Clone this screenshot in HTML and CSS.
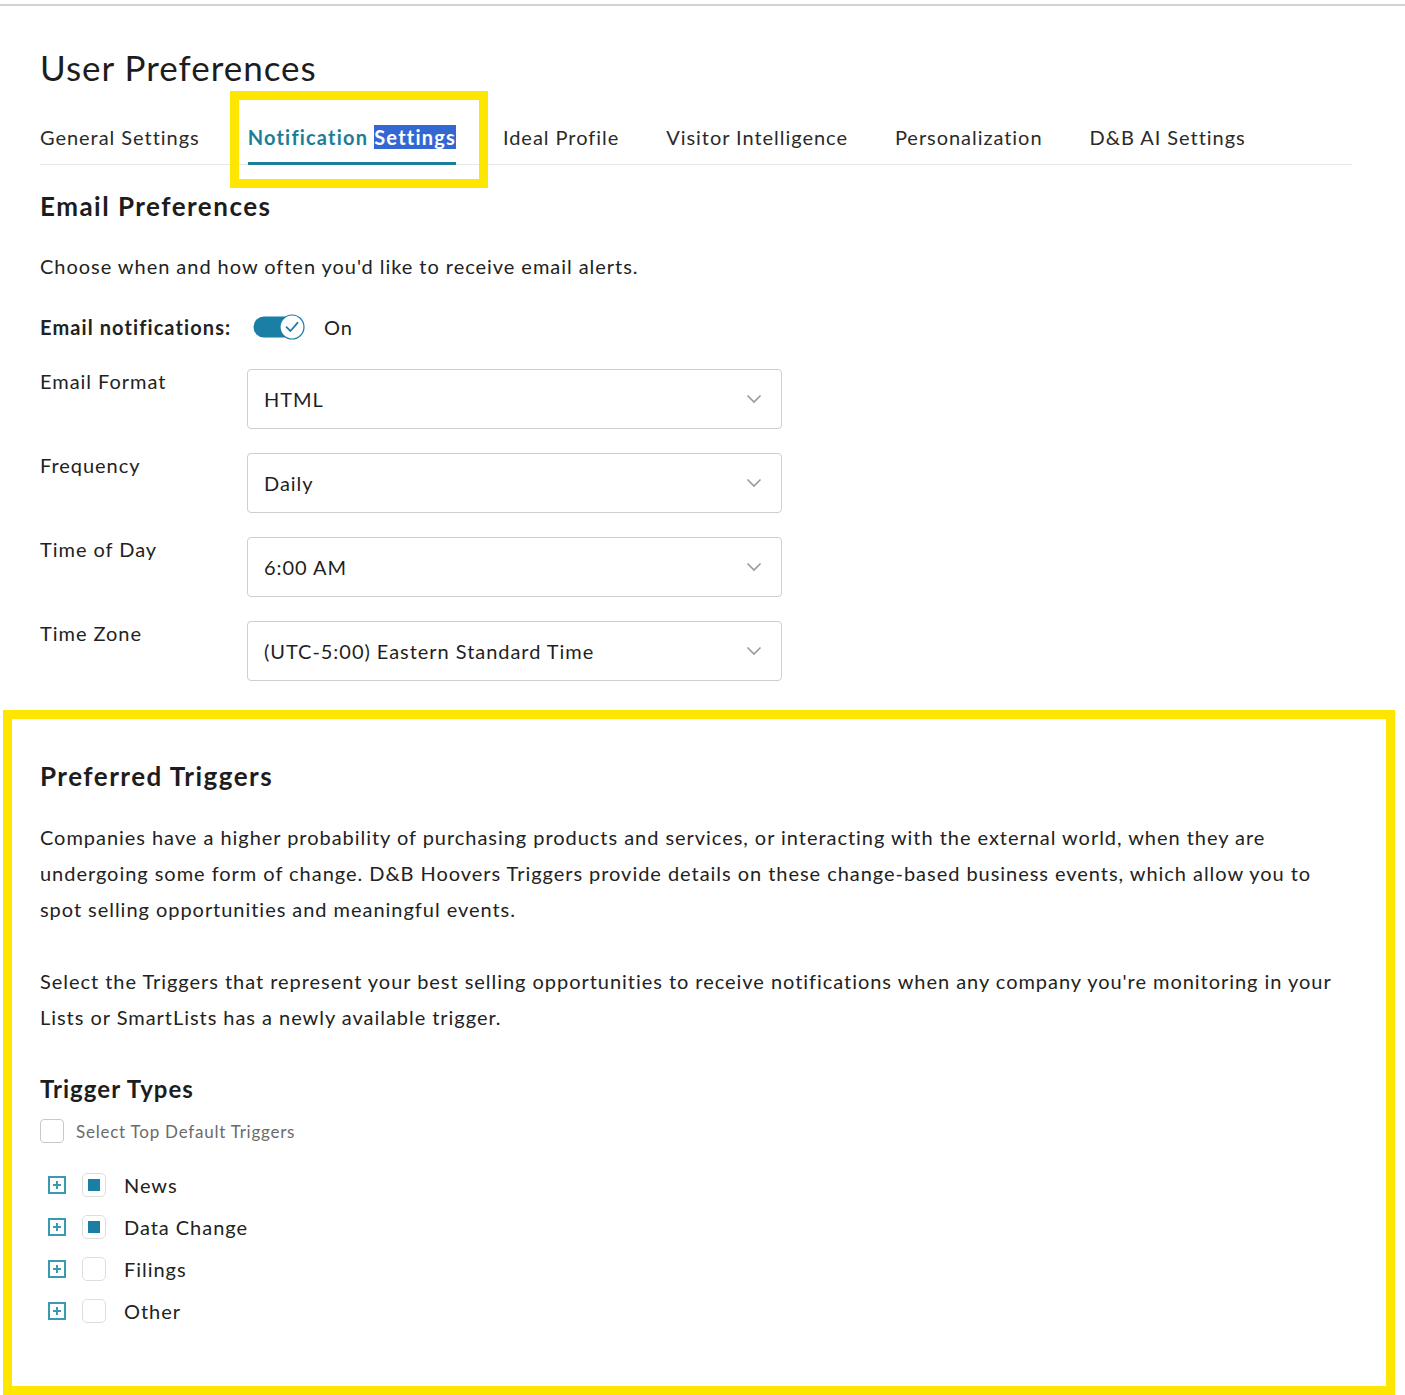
FILE: index.html
```html
<!DOCTYPE html>
<html lang="en">
<head>
<meta charset="utf-8">
<title>User Preferences</title>
<link rel="stylesheet" href="styles.css">
</head>
<body>
<div class="topbar"></div>
<main class="page">
  <h1 class="page-title">User Preferences</h1>

  <nav class="tabs">
    <a class="tab">General Settings</a>
    <a class="tab tab-active">Notification <span class="selected-text">Settings</span></a>
    <a class="tab">Ideal Profile</a>
    <a class="tab">Visitor Intelligence</a>
    <a class="tab">Personalization</a>
    <a class="tab">D&amp;B AI Settings</a>
  </nav>

  <section class="email-prefs">
    <h2 class="section-title">Email Preferences</h2>
    <p class="lead">Choose when and how often you'd like to receive email alerts.</p>

    <div class="toggle-row">
      <span class="toggle-label">Email notifications:</span>
      <span class="toggle">
        <svg width="52" height="26" viewBox="0 0 52 26">
          <rect x="0.5" y="2.5" width="44" height="21" rx="10.5" fill="#1b7ea5"/>
          <circle cx="39" cy="13" r="12" fill="#fff" stroke="#1b7ea5" stroke-width="1.2"/>
          <path d="M33.5 13.2 L37.5 17 L44.5 8.8" fill="none" stroke="#1b7ea5" stroke-width="1.8" stroke-linecap="round" stroke-linejoin="round"/>
        </svg>
      </span>
      <span class="toggle-state">On</span>
    </div>

    <div class="form-grid">
      <div class="form-row">
        <label class="form-label">Email Format</label>
        <div class="select"><span>HTML</span><svg class="chevron" width="16" height="10" viewBox="0 0 16 10"><path d="M1.5 1.5 L8 8 L14.5 1.5" fill="none" stroke="#9a9a9a" stroke-width="1.6"/></svg></div>
      </div>
      <div class="form-row">
        <label class="form-label">Frequency</label>
        <div class="select"><span>Daily</span><svg class="chevron" width="16" height="10" viewBox="0 0 16 10"><path d="M1.5 1.5 L8 8 L14.5 1.5" fill="none" stroke="#9a9a9a" stroke-width="1.6"/></svg></div>
      </div>
      <div class="form-row">
        <label class="form-label">Time of Day</label>
        <div class="select"><span>6:00 AM</span><svg class="chevron" width="16" height="10" viewBox="0 0 16 10"><path d="M1.5 1.5 L8 8 L14.5 1.5" fill="none" stroke="#9a9a9a" stroke-width="1.6"/></svg></div>
      </div>
      <div class="form-row">
        <label class="form-label">Time Zone</label>
        <div class="select"><span>(UTC-5:00) Eastern Standard Time</span><svg class="chevron" width="16" height="10" viewBox="0 0 16 10"><path d="M1.5 1.5 L8 8 L14.5 1.5" fill="none" stroke="#9a9a9a" stroke-width="1.6"/></svg></div>
      </div>
    </div>
  </section>

  <section class="triggers">
    <h2 class="section-title triggers-title">Preferred Triggers</h2>
    <p class="body-text">Companies have a higher probability of purchasing products and services, or interacting with the external world, when they are undergoing some form of change. D&amp;B Hoovers Triggers provide details on these change-based business events, which allow you to spot selling opportunities and meaningful events.</p>
    <p class="body-text">Select the Triggers that represent your best selling opportunities to receive notifications when any company you're monitoring in your Lists or SmartLists has a newly available trigger.</p>

    <h3 class="sub-title">Trigger Types</h3>
    <label class="default-check"><span class="checkbox"></span><span>Select Top Default Triggers</span></label>

    <ul class="tree">
      <li class="tree-row"><span class="expander"></span><span class="checkbox checkbox-on"></span><span class="tree-label">News</span></li>
      <li class="tree-row"><span class="expander"></span><span class="checkbox checkbox-on"></span><span class="tree-label">Data Change</span></li>
      <li class="tree-row"><span class="expander"></span><span class="checkbox"></span><span class="tree-label">Filings</span></li>
      <li class="tree-row"><span class="expander"></span><span class="checkbox"></span><span class="tree-label">Other</span></li>
    </ul>
  </section>
</main>

<div class="highlight highlight-tab"></div>
<div class="highlight highlight-triggers"></div>
</body>
</html>
```

FILE: styles.css
```css
* { box-sizing: border-box; }

html, body {
  margin: 0;
  padding: 0;
  background: #fff;
}

body {
  font-family: "Lato", "Open Sans", sans-serif;
  letter-spacing: 0.06em;
  color: #222;
  width: 1405px;
  height: 1395px;
  overflow: hidden;
  position: relative;
}

.topbar {
  margin-top: 4px;
  height: 2px;
  background: #d2d2d2;
}

.page {
  padding: 0 53px 0 40px;
}

.page-title {
  margin: 38px 0 0;
  font-size: 35px;
  line-height: 46px;
  font-weight: 400;
  color: #1d1d1d;
  letter-spacing: 1px;
}

/* tab strip */
.tabs {
  margin-top: 35px;
  display: flex;
  gap: 47px;
  border-bottom: 1px solid #e8e8e8;
}

.tab {
  font-size: 20px;
  line-height: 24px;
  padding-bottom: 13px;
  margin-bottom: -1px;
  border-bottom: 3px solid transparent;
  color: #2a2a2a;
}

.tab:first-child {
  margin-right: 1px;
}

.tab-active {
  color: #1c7d99;
  font-weight: 700;
  letter-spacing: 0.06em;
  border-bottom-color: #1c7d99;
}

.selected-text {
  background: #3367d1;
  color: #fff;
}

/* email preferences */
.section-title {
  margin: 25px 0 0;
  font-size: 26px;
  line-height: 32px;
  font-weight: 700;
  color: #1d1d1d;
  letter-spacing: 0.057em;
}

.lead {
  margin: 32px 0 0;
  font-size: 20px;
  line-height: 24px;
}

.toggle-row {
  margin-top: 35px;
  height: 28px;
  display: flex;
  align-items: center;
  font-size: 20px;
}

.toggle-label {
  font-weight: 700;
  letter-spacing: 0.055em;
  width: 213px;
  flex: none;
}

.toggle {
  display: flex;
  width: 71px;
}

.toggle-state {
  color: #222;
}

.form-grid {
  margin-top: 28px;
  display: flex;
  flex-direction: column;
  gap: 24px;
}

.form-row {
  display: flex;
  align-items: flex-start;
}

.form-label {
  width: 207px;
  font-size: 20px;
  line-height: 24px;
}

.select {
  width: 535px;
  height: 60px;
  border: 1px solid #cfcfcf;
  border-radius: 4px;
  display: flex;
  align-items: center;
  justify-content: space-between;
  padding: 0 19px 0 16px;
  font-size: 20px;
  color: #1f1f1f;
}

.chevron {
  flex: none;
}

/* triggers */
.triggers-title {
  margin-top: 79px;
}

.body-text {
  margin: 27px 0 0;
  font-size: 20px;
  line-height: 36px;
}

.body-text + .body-text {
  margin-top: 36px;
}

.sub-title {
  margin: 39px 0 0;
  font-size: 24px;
  line-height: 30px;
  font-weight: 700;
  color: #1d1d1d;
  letter-spacing: 0.043em;
}

.default-check {
  margin-top: 15px;
  display: flex;
  align-items: center;
  gap: 12px;
  height: 24px;
  font-size: 17px;
  letter-spacing: 0.045em;
  color: #6b6b6b;
}

.checkbox {
  width: 24px;
  height: 24px;
  border: 1px solid #c9c9c9;
  border-radius: 4px;
  background: #fff;
  display: inline-flex;
  align-items: center;
  justify-content: center;
  flex: none;
}

.tree .checkbox {
  border-color: #dedede;
  border-radius: 5px;
}

.checkbox-on::after {
  content: "";
  width: 12px;
  height: 12px;
  background: #1b7ea5;
}

.tree {
  list-style: none;
  margin: 21px 0 0;
  padding: 0;
}

.tree-row {
  height: 42px;
  display: flex;
  align-items: center;
}

.expander {
  width: 18px;
  height: 18px;
  margin-left: 8px;
  margin-right: 16px;
  border: 2px solid #3a9ab1;
  position: relative;
  flex: none;
}

.expander::before,
.expander::after {
  content: "";
  position: absolute;
  background: #3a9ab1;
}

.expander::before {
  left: 3px;
  right: 3px;
  top: 6px;
  height: 2px;
}

.expander::after {
  top: 3px;
  bottom: 3px;
  left: 6px;
  width: 2px;
}

.tree-label {
  margin-left: 18px;
  font-size: 20px;
}

/* yellow callout frames drawn over the page */
.highlight {
  position: absolute;
  border: 9px solid #ffe600;
  pointer-events: none;
}

.highlight-tab {
  left: 230px;
  top: 91px;
  width: 258px;
  height: 97px;
}

.highlight-triggers {
  left: 3px;
  top: 710px;
  width: 1392px;
  height: 685px;
}
```
